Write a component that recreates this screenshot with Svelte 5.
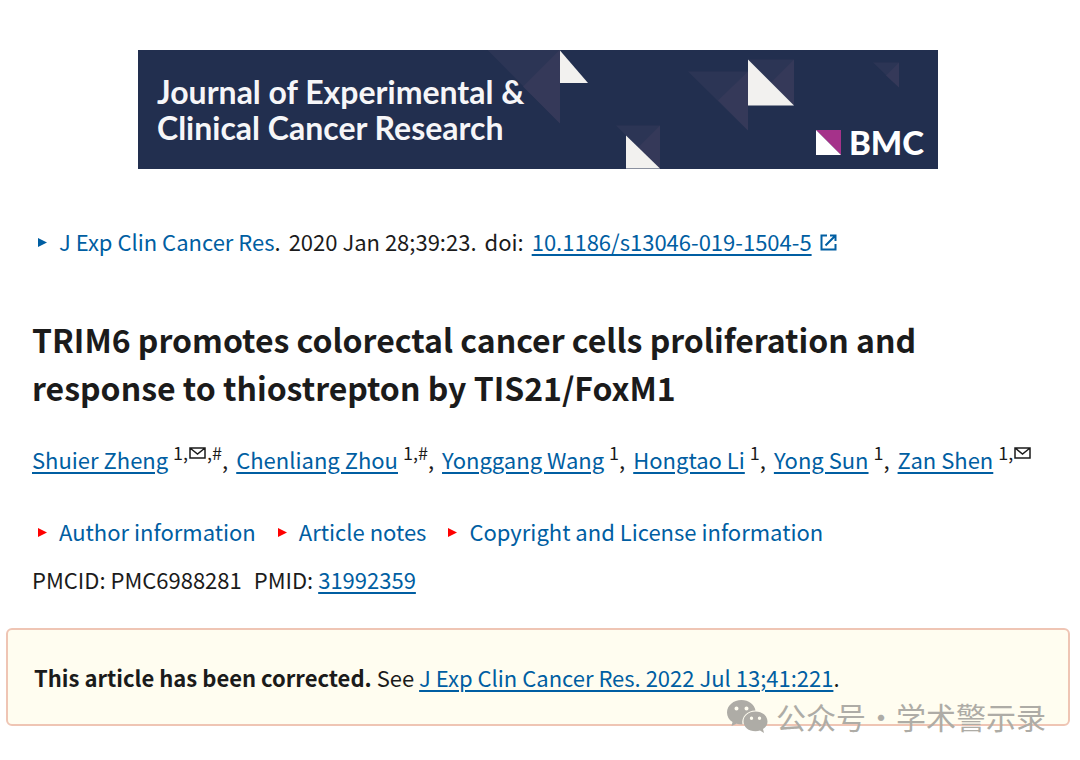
<script>
  const authors = [
    { name: 'Shuier Zheng', marks: ['1,', 'mail', ',#'] },
    { name: 'Chenliang Zhou', marks: ['1,#'] },
    { name: 'Yonggang Wang', marks: ['1'] },
    { name: 'Hongtao Li', marks: ['1'] },
    { name: 'Yong Sun', marks: ['1'] },
    { name: 'Zan Shen', marks: ['1,', 'mail'] },
  ];
  const sections = ['Author information', 'Article notes', 'Copyright and License information'];
</script>

<main>
  <header class="banner">
    <svg class="art" viewBox="0 0 800 120" preserveAspectRatio="xMaxYMid slice" aria-hidden="true">
      <g fill="#2c3555">
        <path d="M349 0H422V74Z" />
        <path d="M478 76H522V120Z" />
        <path d="M550 22H610V81Z" />
        <path d="M610 10H656V56Z" />
        <path d="M735 13H761V38Z" />
      </g>
      <g fill="#353959">
        <path d="M422 0V74L385 37Z" />
        <path d="M522 76V120L500 98Z" />
        <path d="M610 22V81L580 51Z" />
        <path d="M656 10V56L633 33Z" />
        <path d="M761 13V38L748 26Z" />
      </g>
      <g fill="#f2f1ef">
        <path d="M422 1V33.500H450Z" />
        <path d="M488 86V119H522Z" />
        <path d="M610 10V56H656Z" />
      </g>
    </svg>
    <p class="journal">Journal of Experimental &amp;<br />Clinical Cancer Research</p>
    <p class="publisher">
      <svg viewBox="0 0 25 25" aria-hidden="true">
        <path d="M0 0H25V25Z" fill="#a5328a" />
        <path d="M0 0V25H25Z" fill="#fff" />
      </svg>
      BMC
    </p>
  </header>

  <article>
    <p class="citation">
      <span><button type="button"><svg class="tri" viewBox="0 0 9 9" aria-hidden="true"><path d="M0 0L9 4.500L0 9Z" /></svg>J Exp Clin Cancer Res</button>.</span>
      <span>2020 Jan 28;39:23.</span>
      <span>doi:</span>
      <a href="#doi">10.1186/s13046-019-1504-5</a>
      <svg class="external" viewBox="0 0 17 17" aria-hidden="true">
        <path d="M7 1.500H1.500V15.500H15.500V10M10 1.500H15.500V7M15.500 1.500L5.500 11.500" />
      </svg>
    </p>

    <h1>TRIM6 promotes colorectal cancer cells proliferation and response to thiostrepton by TIS21/FoxM1</h1>

    <p class="authors">
      {#each authors as author, i}
        <span><a href="#author">{author.name}</a>&nbsp;<sup>{#each author.marks as mark}{#if mark === 'mail'}<svg viewBox="0 0 17 12" role="img" aria-label="Corresponding author"><path d="M1 1H16V11H1ZM1 1L8.500 7L16 1" /></svg>{:else}{mark}{/if}{/each}</sup>{#if i < authors.length - 1},{/if}</span>
      {/each}
    </p>

    <div class="sections">
      {#each sections as section}
        <button type="button"><svg class="tri" viewBox="0 0 9 9" aria-hidden="true"><path d="M0 0L9 4.500L0 9Z" /></svg>{section}</button>
      {/each}
    </div>

    <p class="ids"><span>PMCID: PMC6988281</span><span>PMID: <a href="#pmid">31992359</a></span></p>
  </article>

  <aside class="notice">
    <strong>This article has been corrected.</strong> See <a href="#correction">J Exp Clin Cancer Res. 2022 Jul 13;41:221</a>.
    <div class="watermark">
      <svg viewBox="0 0 41 33" aria-hidden="true">
        <path fill-rule="evenodd" d="M14.500 0C6.500 0 0 5.500 0 12.500C0 16.500 2 19.800 5.500 22L4.500 26L9.500 23.700Q12 24.500 15.500 24.500C14 17 20 10.500 28.500 10.500C27.500 4.500 21.500 0 14.500 0ZM9.500 6.500A2 2 0 1 1 9.500 10.500A2 2 0 1 1 9.500 6.500ZM19.500 6.500A2 2 0 1 1 19.500 10.500A2 2 0 1 1 19.500 6.500Z" />
        <path fill-rule="evenodd" d="M28.500 11.500C21.500 11.500 16.500 16 16.500 21.500C16.500 27 21.500 31.300 28.500 31.300Q31 31.300 33 30.500L37 33L36 29C39 27.200 40.500 24.500 40.500 21.500C40.500 16 35.500 11.500 28.500 11.500ZM24.500 16.500A1.700 1.700 0 1 1 24.500 19.900A1.700 1.700 0 1 1 24.500 16.500ZM32.500 16.500A1.700 1.700 0 1 1 32.500 19.900A1.700 1.700 0 1 1 32.500 16.500Z" />
      </svg>
      <p><span>公众号</span> <span>·</span> <span>学术警示录</span></p>
    </div>
  </aside>
</main>

<style>
  :global(body) {
    margin: 0;
    background: #fff;
  }

  main {
    padding: 50px 10px 32px 6px;
    color: #1b1b1b;
    font: 22px/32px 'Noto Sans CJK SC', 'Open Sans', sans-serif;
  }

  p,
  h1 {
    margin: 0;
  }

  a {
    color: #005ea2;
    text-decoration-thickness: 2px;
    text-underline-offset: 3px;
  }

  button {
    padding: 0;
    border: 0;
    background: none;
    color: #005ea2;
    font: inherit;
    cursor: pointer;
  }

  .banner {
    position: relative;
    display: flex;
    justify-content: space-between;
    box-sizing: border-box;
    max-width: 800px;
    min-height: 119px;
    margin: 0 auto;
    padding: 24px 14px 9px 19px;
    background: #222f4f;
    color: #f6f6f8;
    font-family: Lato, sans-serif;
  }

  .art {
    position: absolute;
    inset: 0;
    width: 100%;
    height: 100%;
  }

  .journal {
    position: relative;
    font-size: 32px;
    font-weight: 700;
    line-height: 36px;
  }

  .publisher {
    position: relative;
    display: flex;
    align-items: center;
    align-self: flex-end;
    gap: 8px;
    color: #fff;
    font-size: 33px;
    font-weight: 900;
    line-height: 35px;
  }

  .publisher svg {
    width: 25px;
  }

  article {
    padding: 56px 26px 0;
  }

  .citation {
    display: flex;
    flex-wrap: wrap;
    align-items: center;
    gap: 0 8px;
  }

  .tri {
    width: 9px;
    height: 9px;
    margin: 0 12px 0 6px;
    vertical-align: 4px;
    fill: currentColor;
  }

  .external {
    width: 17px;
    height: 17px;
    margin-top: 3px;
    fill: none;
    stroke: #005ea2;
    stroke-width: 2;
  }

  h1 {
    margin-top: 58px;
    font-size: 32px;
    font-weight: 700;
    line-height: 48px;
  }

  .authors {
    display: flex;
    flex-wrap: wrap;
    gap: 0 8px;
    margin-top: 32px;
  }

  sup {
    font-size: 18px;
    line-height: 0;
    vertical-align: 9px;
  }

  sup svg {
    width: 17px;
    height: 12px;
    margin: 0 1px;
    vertical-align: 1px;
    fill: none;
    stroke: #1b1b1b;
    stroke-width: 1.5;
  }

  .sections {
    display: flex;
    flex-wrap: wrap;
    gap: 0 16px;
    margin-top: 40px;
  }

  .sections .tri {
    fill: #f00;
  }

  .ids {
    display: flex;
    flex-wrap: wrap;
    gap: 0 12px;
    margin-top: 16px;
  }

  .notice {
    position: relative;
    margin-top: 33px;
    padding: 31px 26px;
    border: 2px solid #efc5b4;
    border-radius: 6px;
    background: #fffdf0;
  }

  .watermark {
    position: absolute;
    right: 22px;
    bottom: -12px;
    display: flex;
    align-items: center;
    gap: 8px;
    color: #aeaca6;
    font-size: 30px;
    line-height: 40px;
  }

  .watermark p {
    display: flex;
  }

  .watermark svg {
    width: 41px;
    height: 33px;
    fill: #aeaca6;
  }
</style>
